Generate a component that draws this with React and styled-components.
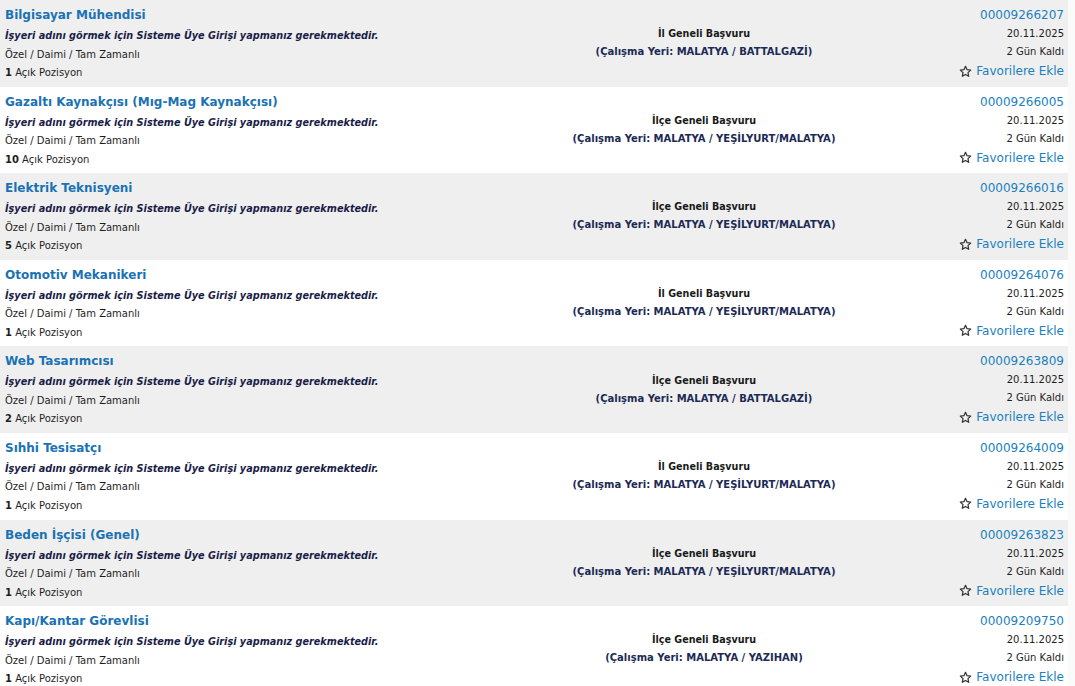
import React from "react";
import styled, { createGlobalStyle } from "styled-components";

const GlobalStyle = createGlobalStyle`
  html, body {
    margin: 0;
    padding: 0;
    background: #fafafa;
  }
  body {
    font-family: "DejaVu Sans", Verdana, sans-serif;
    color: #222;
  }
`;

const List = styled.div`
  width: 1068px;
  display: flex;
  flex-direction: column;
`;

const Row = styled.div`
  box-sizing: border-box;
  height: 86.6px;
  padding: 5px 4px 0 5px;
  display: grid;
  grid-template-columns: 535px 328px 1fr;
  background: ${(p) => (p.$alt ? "#ffffff" : "#efefef")};
`;

const Left = styled.div`
  display: flex;
  flex-direction: column;
`;

const Title = styled.a`
  font-size: 12px;
  font-weight: bold;
  line-height: 20px;
  margin-bottom: 2px;
  color: #1a72b4;
  text-decoration: none;
  white-space: nowrap;
`;

const Notice = styled.div`
  font-size: 9.7px;
  font-weight: bold;
  font-style: italic;
  line-height: 18.5px;
  color: #1a1d48;
  white-space: nowrap;
`;

const Meta = styled.div`
  font-size: 10px;
  line-height: 18.5px;
  color: #1e1e1e;
  white-space: nowrap;
  b {
    font-weight: bold;
  }
`;

const Middle = styled.div`
  display: flex;
  flex-direction: column;
  align-items: center;
  justify-content: center;
  padding-bottom: 5px;
`;

const Scope = styled.div`
  font-size: 9.6px;
  font-weight: bold;
  line-height: 18px;
  color: #1a1a1a;
  white-space: nowrap;
`;

const Place = styled.div`
  font-size: 10px;
  font-weight: bold;
  line-height: 18px;
  color: #1c2a55;
  white-space: nowrap;
`;

const Right = styled.div`
  display: flex;
  flex-direction: column;
  align-items: flex-end;
`;

const Code = styled.a`
  font-size: 12px;
  line-height: 20px;
  color: #1b7fc0;
  text-decoration: none;
`;

const Small = styled.div`
  font-size: 10px;
  line-height: 18px;
  color: #1e1e1e;
  white-space: nowrap;
`;

const Fav = styled.a`
  display: flex;
  align-items: center;
  gap: 4px;
  font-size: 12px;
  line-height: 20px;
  color: #1b7fc0;
  text-decoration: none;
  white-space: nowrap;
`;

const Star = () => (
  <svg width="13" height="13" viewBox="0 0 24 24" fill="none" stroke="#333" strokeWidth="2.3" strokeLinejoin="round">
    <path d="M12 2.5l2.9 6.2 6.7.8-5 4.6 1.3 6.7L12 17.5l-5.9 3.3 1.3-6.7-5-4.6 6.7-.8z" />
  </svg>
);

const jobs = [
  { t: "Bilgisayar Mühendisi", n: 1, s: "İl Geneli Başvuru", p: "MALATYA / BATTALGAZİ", c: "00009266207" },
  { t: "Gazaltı Kaynakçısı (Mıg-Mag Kaynakçısı)", n: 10, s: "İlçe Geneli Başvuru", p: "MALATYA / YEŞİLYURT/MALATYA", c: "00009266005" },
  { t: "Elektrik Teknisyeni", n: 5, s: "İlçe Geneli Başvuru", p: "MALATYA / YEŞİLYURT/MALATYA", c: "00009266016" },
  { t: "Otomotiv Mekanikeri", n: 1, s: "İl Geneli Başvuru", p: "MALATYA / YEŞİLYURT/MALATYA", c: "00009264076" },
  { t: "Web Tasarımcısı", n: 2, s: "İlçe Geneli Başvuru", p: "MALATYA / BATTALGAZİ", c: "00009263809" },
  { t: "Sıhhi Tesisatçı", n: 1, s: "İl Geneli Başvuru", p: "MALATYA / YEŞİLYURT/MALATYA", c: "00009264009" },
  { t: "Beden İşçisi (Genel)", n: 1, s: "İlçe Geneli Başvuru", p: "MALATYA / YEŞİLYURT/MALATYA", c: "00009263823" },
  { t: "Kapı/Kantar Görevlisi", n: 1, s: "İlçe Geneli Başvuru", p: "MALATYA / YAZIHAN", c: "00009209750" },
];

export default function App() {
  return (
    <>
      <GlobalStyle />
      <List>
        {jobs.map((j, i) => (
          <Row key={j.c} $alt={i % 2 === 1}>
            <Left>
              <Title href="#">{j.t}</Title>
              <Notice>İşyeri adını görmek için Sisteme Üye Girişi yapmanız gerekmektedir.</Notice>
              <Meta>Özel / Daimi / Tam Zamanlı</Meta>
              <Meta>
                <b>{j.n}</b> Açık Pozisyon
              </Meta>
            </Left>
            <Middle>
              <Scope>{j.s}</Scope>
              <Place>(Çalışma Yeri: {j.p})</Place>
            </Middle>
            <Right>
              <Code href="#">{j.c}</Code>
              <Small>20.11.2025</Small>
              <Small>2 Gün Kaldı</Small>
              <Fav href="#">
                <Star />
                Favorilere Ekle
              </Fav>
            </Right>
          </Row>
        ))}
      </List>
    </>
  );
}
